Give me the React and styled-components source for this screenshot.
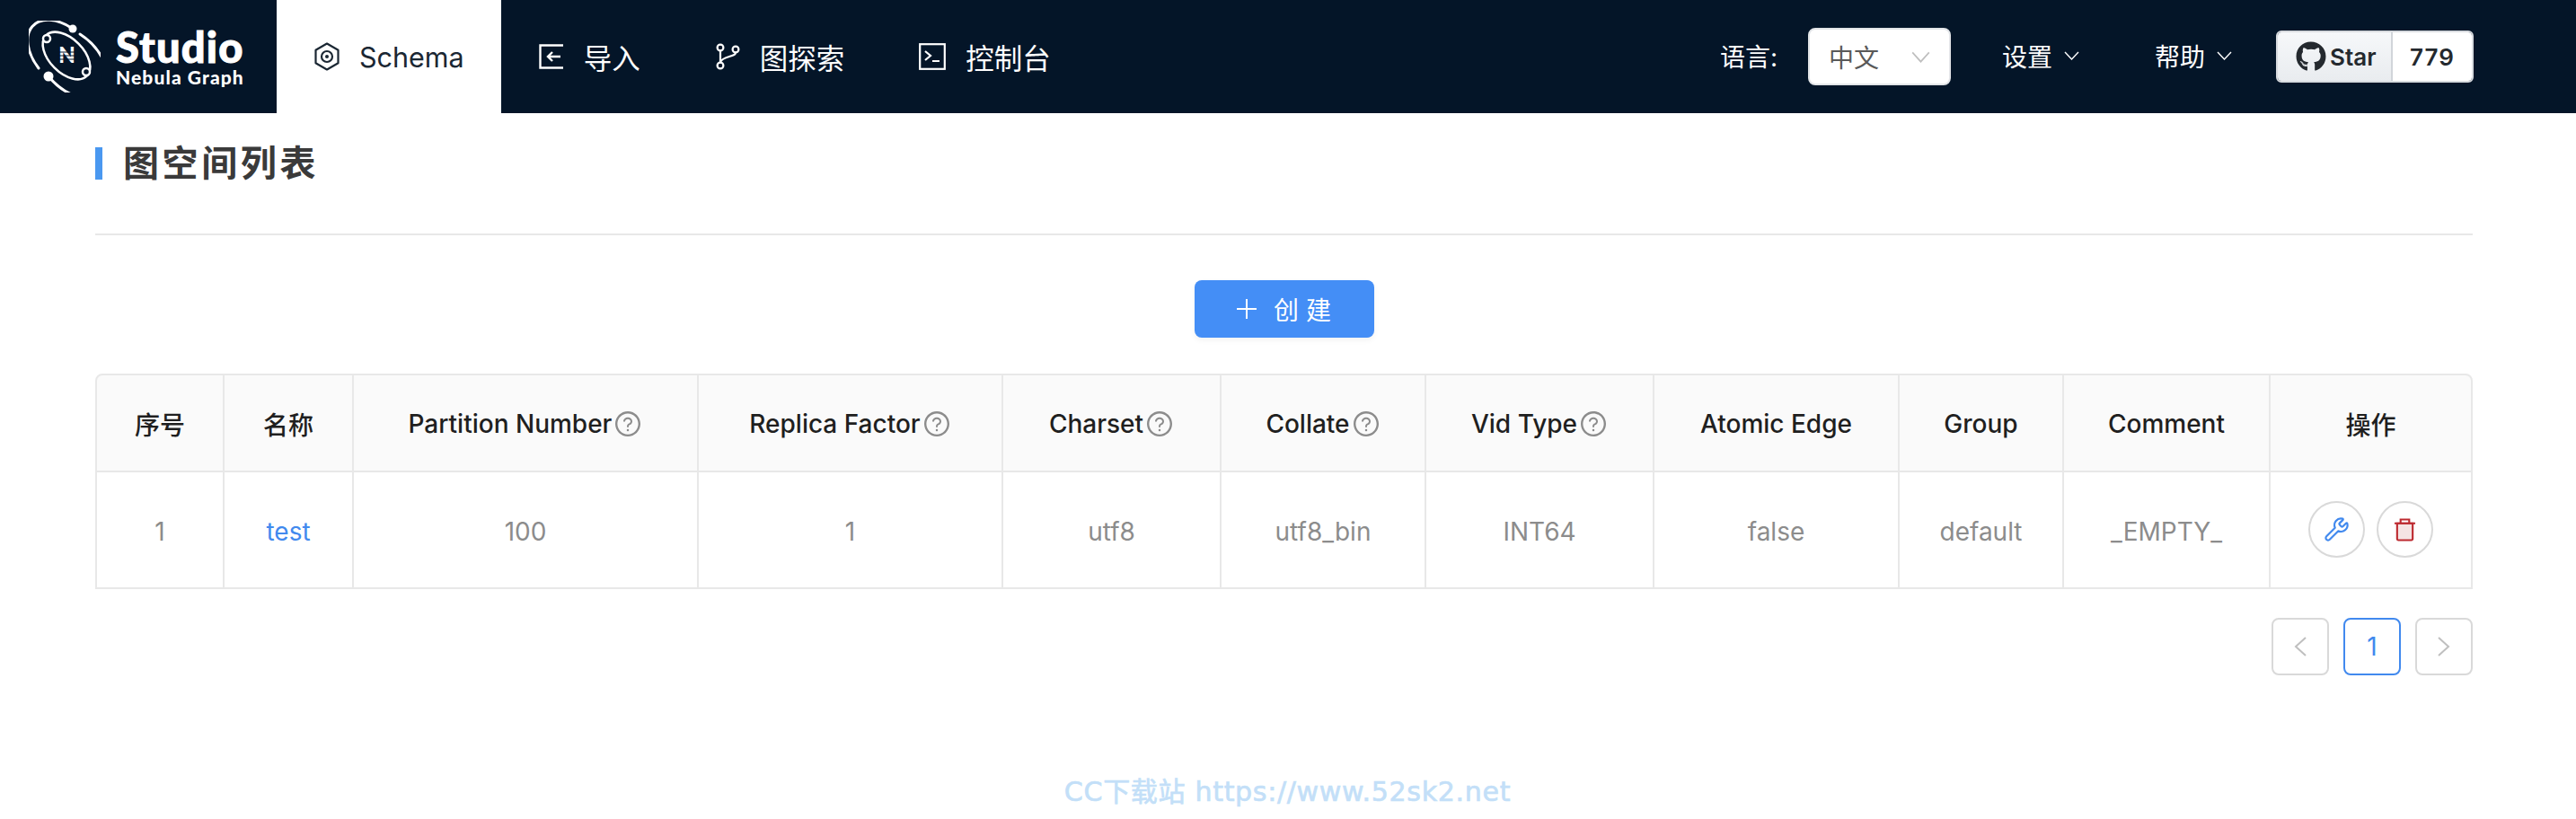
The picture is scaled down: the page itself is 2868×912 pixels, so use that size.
import React from 'react'
import styled, { createGlobalStyle } from 'styled-components'
import { FaGithub } from 'react-icons/fa'
import { AiOutlineQuestionCircle } from 'react-icons/ai'
import { Wrench } from 'lucide-react'

const GlobalStyle = createGlobalStyle`
  * { box-sizing: border-box; }
  html, body { margin: 0; padding: 0; background: #fff; }
  body { font-family: Inter, "Noto Sans CJK SC", sans-serif; }
`

const NAVY = '#041528'
const BLUE = '#4189ee'
const LINE = '#e8e8e8'

const Page = styled.div`
  width: 2868px;
  height: 912px;
  overflow: hidden;
  display: flex;
  flex-direction: column;
`

const NavBar = styled.header`
  height: 126px;
  flex: none;
  background: ${NAVY};
  display: flex;
  align-items: stretch;
  color: #fff;
`

const LogoWrap = styled.div`
  width: 308px;
  flex: none;
  padding-left: 32px;
  display: flex;
  align-items: center;
  gap: 17px;
`

const LogoText = styled.div`
  display: flex;
  flex-direction: column;
  font-family: Lato, sans-serif;
  font-weight: 900;
  margin-top: 2px;
`

const LogoTitle = styled.span`
  font-size: 47px;
  line-height: 44px;
  letter-spacing: 1.2px;
  -webkit-text-stroke: 1px #fff;
`

const LogoSub = styled.span`
  font-size: 21px;
  line-height: 24px;
  letter-spacing: 1.1px;
`

const NavTab = styled.div`
  display: flex;
  align-items: center;
  gap: 22px;
  padding: 0 41px 0 42px;
  font-size: ${({ $active }) => ($active ? '30.5px' : '31.5px')};
  background: ${({ $active }) => ($active ? '#fff' : 'transparent')};
  color: ${({ $active }) => ($active ? '#1b2733' : '#fff')};
`

const NavRight = styled.div`
  margin-left: auto;
  padding-right: 114px;
  display: flex;
  align-items: center;
`

const LangLabel = styled.span`
  font-size: 28px;
  margin-right: 34px;
  padding-bottom: 2px;
`

const LangSelect = styled.div`
  width: 159px;
  height: 64px;
  background: #fff;
  border-radius: 8px;
  border: 2px solid #e3e5e8;
  padding: 0 21px;
  display: flex;
  align-items: center;
  justify-content: space-between;
  color: #595959;
  font-size: 28px;
  margin-right: 57px;
`

const MenuLink = styled.div`
  display: flex;
  align-items: center;
  gap: 13px;
  font-size: 28px;
  padding-bottom: 2px;
  margin-right: ${({ $mr }) => $mr}px;
`

const StarBox = styled.div`
  width: 220px;
  height: 58px;
  display: flex;
  border-radius: 6px;
  overflow: hidden;
  border: 2px solid #d8dbdf;
  color: #24292e;
  font-size: 26px;
  font-weight: 600;
`

const StarLabel = styled.div`
  width: 128px;
  display: flex;
  align-items: center;
  gap: 4px;
  padding-left: 20px;
  background: linear-gradient(#f6f8fa, #e9ecef);
  border-right: 2px solid #d1d5da;
`

const StarCount = styled.div`
  flex: 1;
  background: #fff;
  display: flex;
  align-items: center;
  justify-content: center;
  letter-spacing: 1px;
`

const Content = styled.main`
  padding: 38px 115px 0 106px;
  display: flex;
  flex-direction: column;
`

const Title = styled.h1`
  margin: 0;
  height: 36px;
  border-left: 8px solid #4a98f0;
  padding-left: 23px;
  font-size: 40px;
  line-height: 36px;
  font-weight: 700;
  letter-spacing: 3.6px;
  color: #3a3a3a;
`

const Divider = styled.hr`
  margin: 60px 0 50px;
  border: none;
  height: 2px;
  background: ${LINE};
`

const Toolbar = styled.div`
  display: flex;
  justify-content: center;
  margin-bottom: 40px;
`

const CreateButton = styled.button`
  width: 200px;
  height: 64px;
  border: none;
  border-radius: 8px;
  background: #448ef6;
  box-shadow: 0 3px 6px rgba(0, 0, 0, 0.05);
  color: #fff;
  font-family: inherit;
  font-size: 28px;
  display: flex;
  align-items: center;
  justify-content: center;
  gap: 19px;
  padding: 0;
`

const Table = styled.table`
  width: 2647px;
  table-layout: fixed;
  border-collapse: separate;
  border-spacing: 0;
`

const Th = styled.th`
  height: 110px;
  padding: 1px 0 0;
  background: #fafafa;
  font-size: 28px;
  font-weight: 500;
  color: #1f1f1f;
  border-top: 2px solid ${LINE};
  border-right: 2px solid ${LINE};
  border-bottom: 2px solid ${LINE};
  &:first-child { border-left: 2px solid ${LINE}; border-top-left-radius: 8px; }
  &:last-child { border-top-right-radius: 8px; }
`

const Td = styled.td`
  height: 130px;
  padding: 4px 0 0;
  text-align: center;
  font-size: 28px;
  color: ${({ $link }) => ($link ? BLUE : '#8c8c8c')};
  border-right: 2px solid ${LINE};
  border-bottom: 2px solid ${LINE};
  &:first-child { border-left: 2px solid ${LINE}; }
`

const HeadInner = styled.span`
  display: inline-flex;
  align-items: center;
  gap: 2px;
  color: inherit;
  svg { color: #8c8c8c; }
`

const Actions = styled.div`
  display: flex;
  justify-content: center;
  gap: 13px;
  margin-top: -6px;
`

const RoundButton = styled.div`
  width: 63px;
  height: 63px;
  border-radius: 50%;
  border: 2px solid #d9d9d9;
  display: flex;
  align-items: center;
  justify-content: center;
  color: ${({ $color }) => $color};
`

const Pager = styled.div`
  margin-top: 32px;
  display: flex;
  justify-content: flex-end;
  gap: 16px;
`

const PageItem = styled.div`
  width: 64px;
  height: 64px;
  border-radius: 8px;
  border: 2px solid ${({ $active }) => ($active ? BLUE : '#d9d9d9')};
  color: ${({ $active }) => ($active ? BLUE : '#bfbfbf')};
  font-size: 28px;
  display: flex;
  align-items: center;
  justify-content: center;
`

const Watermark = styled.div`
  margin-top: 112px;
  align-self: center;
  margin-left: 8px;
  font-family: "DejaVu Sans", "Noto Sans CJK SC", sans-serif;
  font-size: 30px;
  font-weight: 400;
  letter-spacing: 0.7px;
  -webkit-text-stroke: 0.7px #c3dff8;
  line-height: 36px;
  white-space: nowrap;
  color: #c3dff8;
`

const Logo = () => (
  <svg width="80" height="80" viewBox="30 23 80 80" fill="none" stroke="#fff" strokeWidth="3" strokeLinecap="round">
    <path d="M79 32 A48 30 45 0 0 41 76" />
    <path d="M52 85 A48 30 45 1 0 87 38" />
    <ellipse cx="72" cy="62" rx="32" ry="19" transform="rotate(45 72 62)" strokeWidth="2.5" />
    <circle cx="79" cy="32" r="4.5" fill="#fff" stroke="none" />
    <circle cx="52" cy="85" r="5.5" fill="#fff" stroke="none" />
    <circle cx="50" cy="43" r="4" fill={NAVY} strokeWidth="2.5" />
    <circle cx="94" cy="80" r="4" fill={NAVY} strokeWidth="2.5" />
    <text x="72.5" y="70" textAnchor="middle" fontFamily="Lato, sans-serif" fontWeight="900" fontSize="24" fill="#fff" stroke="none">N</text>
    <path d="M62 58h21M62 62h21M62 66h21" stroke={NAVY} strokeWidth="1" strokeLinecap="butt" />
  </svg>
)

const SchemaIcon = () => (
  <svg width="28" height="32" viewBox="0 0 28 32" fill="none" stroke="currentColor" strokeWidth="2.2">
    <path d="M14 1.5 L26.5 8.7 V23.3 L14 30.5 L1.5 23.3 V8.7 Z" strokeLinejoin="round" />
    <circle cx="14" cy="16" r="6" />
    <circle cx="14" cy="16" r="2" fill="currentColor" stroke="none" />
  </svg>
)

const ImportIcon = () => (
  <svg width="28" height="28" viewBox="0 0 28 28" fill="none" stroke="currentColor" strokeWidth="2.4">
    <path d="M27 1.5 H1.5 V26.5 H27" />
    <path d="M24 14 H10 M15 9 L10 14 L15 19" />
  </svg>
)

const BranchIcon = () => (
  <svg width="28" height="30" viewBox="0 0 28 30" fill="none" stroke="currentColor" strokeWidth="2.2">
    <circle cx="6" cy="5" r="3.4" />
    <circle cx="6" cy="25" r="3.4" />
    <circle cx="23" cy="7" r="3.4" />
    <path d="M6 8.5 V21.5 M23 10.5 C23 16 8 14 6 21.5" />
  </svg>
)

const TerminalIcon = () => (
  <svg width="30" height="30" viewBox="0 0 30 30" fill="none" stroke="currentColor" strokeWidth="2.2">
    <rect x="1.2" y="1.2" width="27.6" height="27.6" />
    <path d="M7 9 L13 14 L7 19 M15 20 H23" />
  </svg>
)

const Chevron = ({ w = 17, h = 10, color = '#fff' }) => (
  <svg width={w} height={h} viewBox="0 0 17 10" preserveAspectRatio="none" fill="none" stroke={color} strokeWidth="1.4">
    <path d="M1 1 L8.5 9 L16 1" />
  </svg>
)

const TrashIcon = () => (
  <svg width="25" height="27" viewBox="0 0 26 28" fill="none" stroke="currentColor" strokeWidth="2.2">
    <path d="M4 7 H22 V25 a1.5 1.5 0 0 1 -1.5 1.5 H5.5 A1.5 1.5 0 0 1 4 25 Z" fill="#f5e4e4" />
    <path d="M1 7 H25 M8 7 V2.5 H18 V7" />
  </svg>
)

const PagerArrow = ({ dir }) => (
  <svg width="14" height="22" viewBox="0 0 14 22" fill="none" stroke="currentColor" strokeWidth="2">
    <path d={dir === 'left' ? 'M13 1 L2 11 L13 21' : 'M1 1 L12 11 L1 21'} />
  </svg>
)

const columns = [
  { title: '序号', width: 144, value: '1' },
  { title: '名称', width: 144, value: 'test', link: true },
  { title: 'Partition Number', width: 384, value: '100', help: true },
  { title: 'Replica Factor', width: 339, value: '1', help: true },
  { title: 'Charset', width: 243, value: 'utf8', help: true },
  { title: 'Collate', width: 228, value: 'utf8_bin', help: true },
  { title: 'Vid Type', width: 254, value: 'INT64', help: true },
  { title: 'Atomic Edge', width: 273, value: 'false' },
  { title: 'Group', width: 183, value: 'default' },
  { title: 'Comment', width: 230, value: '_EMPTY_' },
]

const Col = styled.col`
  width: ${({ $w }) => $w}px;
`

const tabs = [
  { label: 'Schema', icon: <SchemaIcon />, active: true },
  { label: '导入', icon: <ImportIcon /> },
  { label: '图探索', icon: <BranchIcon /> },
  { label: '控制台', icon: <TerminalIcon /> },
]

const App = () => (
  <Page>
    <GlobalStyle />
    <NavBar>
      <LogoWrap>
        <Logo />
        <LogoText>
          <LogoTitle>Studio</LogoTitle>
          <LogoSub>Nebula Graph</LogoSub>
        </LogoText>
      </LogoWrap>
      {tabs.map(t => (
        <NavTab key={t.label} $active={t.active}>
          {t.icon}
          <span>{t.label}</span>
        </NavTab>
      ))}
      <NavRight>
        <LangLabel>语言:</LangLabel>
        <LangSelect>
          <span>中文</span>
          <Chevron w={21} h={13} color="#bfbfbf" />
        </LangSelect>
        <MenuLink $mr={84}>设置 <Chevron /></MenuLink>
        <MenuLink $mr={49}>帮助 <Chevron /></MenuLink>
        <StarBox>
          <StarLabel><FaGithub size={34} />Star</StarLabel>
          <StarCount>779</StarCount>
        </StarBox>
      </NavRight>
    </NavBar>
    <Content>
      <Title>图空间列表</Title>
      <Divider />
      <Toolbar>
        <CreateButton>
          <svg width="22" height="22" viewBox="0 0 22 22" stroke="#fff" strokeWidth="2"><path d="M11 0 V22 M0 11 H22" /></svg>
          <span>创 建</span>
        </CreateButton>
      </Toolbar>
      <Table>
        <colgroup>
          {columns.map(c => <Col key={c.title} $w={c.width} />)}
          <Col $w={225} />
        </colgroup>
        <thead>
          <tr>
            {columns.map(c => (
              <Th key={c.title}>
                <HeadInner>
                  {c.title}
                  {c.help && <AiOutlineQuestionCircle size={32} />}
                </HeadInner>
              </Th>
            ))}
            <Th>操作</Th>
          </tr>
        </thead>
        <tbody>
          <tr>
            {columns.map(c => <Td key={c.title} $link={c.link}>{c.value}</Td>)}
            <Td>
              <Actions>
                <RoundButton $color={BLUE}><Wrench size={29} strokeWidth={1.8} /></RoundButton>
                <RoundButton $color="#bd2a30"><TrashIcon /></RoundButton>
              </Actions>
            </Td>
          </tr>
        </tbody>
      </Table>
      <Pager>
        <PageItem><PagerArrow dir="left" /></PageItem>
        <PageItem $active>1</PageItem>
        <PageItem><PagerArrow dir="right" /></PageItem>
      </Pager>
      <Watermark>CC下载站 https://www.52sk2.net</Watermark>
    </Content>
  </Page>
)

export default App
